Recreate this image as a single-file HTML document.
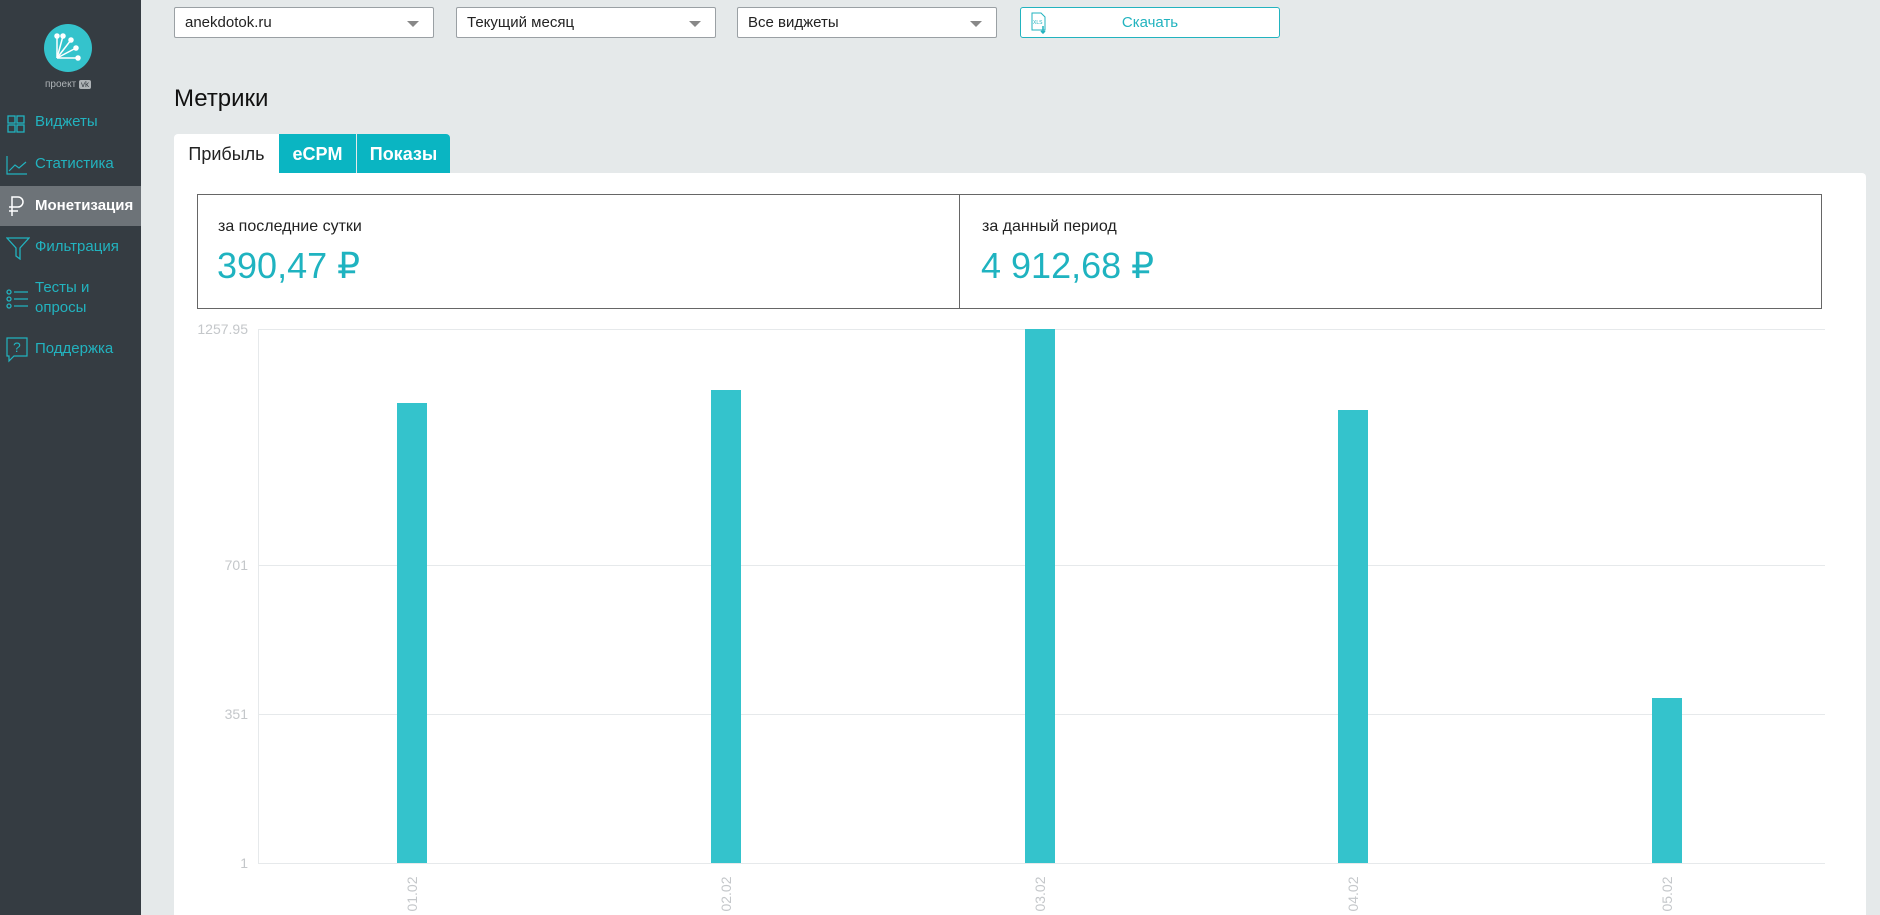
<!DOCTYPE html>
<html style="overflow:hidden;height:915px"><head><meta charset="utf-8"><style>
*{margin:0;padding:0;box-sizing:border-box}
body{width:1880px;height:915px;background:#e5e9ea;font-family:"Liberation Sans",sans-serif;position:relative;overflow:hidden}
.a{position:absolute}
.side{left:0;top:0;width:141px;height:915px;background:#353c42}
.mi{position:absolute;left:35px;font-size:15px;color:#22b3bf;line-height:20px}
.ico{position:absolute;left:6px}
.dd{position:absolute;top:7px;height:31px;background:#fff;border:1px solid #9aa0a4;border-radius:2px;font-size:15px;color:#222;padding:6px 10px}
.dd:after{content:"";position:absolute;right:14px;top:13px;border-left:6px solid transparent;border-right:6px solid transparent;border-top:6px solid #888}
.ylab{position:absolute;right:1632px;font-size:14px;color:#c4c7ca}
.gl{position:absolute;left:258px;width:1567px;height:1px;background:#e6e9eb}
.bar{position:absolute;width:30px;background:#34c3cc}
.xl{position:absolute;top:886px;font-size:14px;color:#c4c7ca;transform:rotate(-90deg);width:44px;text-align:center}
</style></head><body>
<div class="a side">
  <svg class="a" style="left:44px;top:24px" width="48" height="48" viewBox="0 0 48 48">
    <circle cx="24" cy="24" r="24" fill="#34c3cc"/>
    <g stroke="#fff" stroke-width="1.5" fill="#fff">
      <line x1="13" y1="34" x2="13" y2="12"/><line x1="13" y1="34" x2="19" y2="12"/><line x1="13" y1="34" x2="27" y2="16"/><line x1="13" y1="34" x2="32" y2="24"/><line x1="13" y1="34" x2="34" y2="34"/>
      <circle cx="13" cy="12" r="2"/><circle cx="19" cy="12" r="2"/><circle cx="27" cy="16" r="2"/><circle cx="32" cy="24" r="2"/><circle cx="34" cy="34" r="2"/>
    </g>
  </svg>
  <div class="a" style="left:45px;top:79px;font-size:10px;color:#aeb3b6">проект <span style="background:#aeb3b6;color:#353c42;font-size:8px;padding:0 2px;border-radius:2px">vk</span></div>
  <svg class="ico" style="top:114px" width="20" height="20"><g fill="none" stroke="#22b3bf" stroke-width="1.3"><rect x="2" y="2" width="7" height="7"/><rect x="11" y="2" width="7" height="7"/><rect x="2" y="11" width="7" height="7"/><rect x="11" y="11" width="7" height="7"/></g></svg>
  <div class="mi" style="top:112px">Виджеты</div>
  <svg class="ico" style="top:155px" width="22" height="20"><path d="M1 1V19H21M3 16L9 10L13 13L20 7" fill="none" stroke="#22b3bf" stroke-width="1.2"/></svg>
  <div class="mi" style="top:154px">Статистика</div>
  <div class="a" style="left:0;top:186px;width:141px;height:40px;background:#6d7378"></div>
  <svg class="ico" style="top:195px" width="20" height="22"><path d="M6 21V2H12A5 5 0 0 1 12 12H3M3 16H12" fill="none" stroke="#fff" stroke-width="1.5"/></svg>
  <div class="mi" style="top:196px;color:#fff;font-weight:bold">Монетизация</div>
  <svg class="ico" style="top:236px" width="24" height="24"><path d="M1 2H23L14 12V23L10 20V12Z" fill="none" stroke="#22b3bf" stroke-width="1.3"/></svg>
  <div class="mi" style="top:237px">Фильтрация</div>
  <svg class="ico" style="top:288px" width="24" height="24"><g fill="none" stroke="#22b3bf" stroke-width="1.3"><circle cx="3" cy="4" r="2"/><circle cx="3" cy="11" r="2"/><circle cx="3" cy="18" r="2"/><path d="M8 4H22M8 11H22M8 18H22"/></g></svg>
  <div class="mi" style="top:278px">Тесты и<br>опросы</div>
  <svg class="ico" style="top:337px" width="22" height="26"><path d="M1 1H21V19H8L3 24V19H1Z" fill="none" stroke="#22b3bf" stroke-width="1.2"/><text x="7" y="15" font-size="14" fill="#22b3bf" font-family="Liberation Sans">?</text></svg>
  <div class="mi" style="top:339px">Поддержка</div>
</div>

<div class="dd" style="left:174px;width:260px">anekdotok.ru</div>
<div class="dd" style="left:456px;width:260px">Текущий месяц</div>
<div class="dd" style="left:737px;width:260px">Все виджеты</div>
<div class="a" style="left:1020px;top:7px;width:260px;height:31px;border:1px solid #22b3bf;border-radius:3px;background:#fff;color:#22b3bf;font-size:15px;text-align:center;line-height:29px">Скачать
  <svg class="a" style="left:10px;top:4px" width="16" height="22"><path d="M1 1H10L14 5V18H1Z" fill="none" stroke="#22b3bf"/><text x="2" y="12" font-size="5" fill="#22b3bf" font-family="Liberation Sans">XLS</text><path d="M12 14V21M10 19L12 21L14 19" stroke="#22b3bf" fill="none" stroke-width="1.5"/></svg>
</div>

<div class="a" style="left:174px;top:85px;font-size:24px;color:#111">Метрики</div>

<div class="a" style="left:174px;top:173px;width:1692px;height:742px;background:#fff;border-radius:0 4px 0 0"></div>
<div class="a" style="left:174px;top:134px;width:105px;height:39px;background:#fff;border-radius:4px 0 0 0;font-size:18px;color:#222;text-align:center;line-height:40px">Прибыль</div>
<div class="a" style="left:279px;top:134px;width:77px;height:39px;background:#0ab5c2;color:#fff;font-weight:bold;font-size:18px;text-align:center;line-height:40px">eCPM</div>
<div class="a" style="left:357px;top:134px;width:93px;height:39px;background:#0ab5c2;color:#fff;font-weight:bold;font-size:18px;text-align:center;line-height:40px;border-radius:0 4px 0 0">Показы</div>

<div class="a" style="left:197px;top:194px;width:1625px;height:115px;border:1px solid #666"></div>
<div class="a" style="left:959px;top:194px;width:1px;height:115px;background:#666"></div>
<div class="a" style="left:218px;top:218px;font-size:16px;color:#222">за последние сутки</div>
<div class="a" style="left:217px;top:245px;font-size:36px;color:#1fb3c0">390,47 ₽</div>
<div class="a" style="left:982px;top:218px;font-size:16px;color:#222">за данный период</div>
<div class="a" style="left:981px;top:245px;font-size:36px;color:#1fb3c0">4 912,68 ₽</div>

<div class="a" style="left:258px;top:329px;width:1px;height:534px;background:#e6e9eb"></div>
<div class="gl" style="top:329px"></div>
<div class="gl" style="top:565px"></div>
<div class="gl" style="top:714px"></div>
<div class="gl" style="top:863px"></div>
<div class="ylab" style="top:321px">1257.95</div>
<div class="ylab" style="top:557px">701</div>
<div class="ylab" style="top:706px">351</div>
<div class="ylab" style="top:855px">1</div>

<div class="bar" style="left:397px;top:403px;height:460px"></div>
<div class="bar" style="left:711px;top:390px;height:473px"></div>
<div class="bar" style="left:1025px;top:329px;height:534px"></div>
<div class="bar" style="left:1338px;top:410px;height:453px"></div>
<div class="bar" style="left:1652px;top:698px;height:165px"></div>

<div class="xl" style="left:390px">01.02</div>
<div class="xl" style="left:704px">02.02</div>
<div class="xl" style="left:1018px">03.02</div>
<div class="xl" style="left:1331px">04.02</div>
<div class="xl" style="left:1645px">05.02</div>
</body></html>
